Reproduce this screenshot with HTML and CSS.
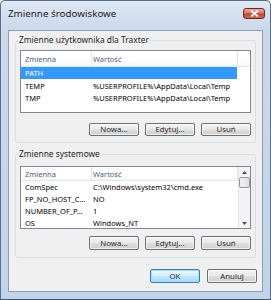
FILE: index.html
```html
<!DOCTYPE html>
<html>
<head>
<meta charset="utf-8">
<link rel="stylesheet" href="styles.css">
</head>
<body>
<div class="window">
  <div class="titlebar">
    <span class="title">Zmienne środowiskowe</span>
    <span class="close"><svg width="9" height="7" viewBox="0 0 9 7"><path d="M1 0.5 L8 6.5 M8 0.5 L1 6.5" stroke="#fff" stroke-width="1.8"/></svg></span>
  </div>
  <div class="client">
    <fieldset class="group g1">
      <legend>Zmienne użytkownika dla Traxter</legend>
      <div class="list l1">
        <div class="header">
          <span class="col c1">Zmienna</span>
          <span class="col c2">Wartość</span>
          <span class="col rest"></span>
        </div>
        <div class="row selected"><span class="c1">PATH</span><span class="c2"></span></div>
        <div class="row"><span class="c1">TEMP</span><span class="c2">%USERPROFILE%\AppData\Local\Temp</span></div>
        <div class="row"><span class="c1">TMP</span><span class="c2">%USERPROFILE%\AppData\Local\Temp</span></div>
      </div>
      <div class="buttons b1">
        <button class="btn">Nowa...</button>
        <button class="btn">Edytuj...</button>
        <button class="btn">Usuń</button>
      </div>
    </fieldset>
    <fieldset class="group g2">
      <legend>Zmienne systemowe</legend>
      <div class="list l2">
        <div class="listbody">
          <div class="header">
            <span class="col c1">Zmienna</span>
            <span class="col c2">Wartość</span>
          </div>
          <div class="row"><span class="c1">ComSpec</span><span class="c2">C:\Windows\system32\cmd.exe</span></div>
          <div class="row"><span class="c1">FP_NO_HOST_C...</span><span class="c2">NO</span></div>
          <div class="row"><span class="c1">NUMBER_OF_P...</span><span class="c2">1</span></div>
          <div class="row"><span class="c1">OS</span><span class="c2">Windows_NT</span></div>
        </div>
        <div class="scrollbar">
          <div class="arrow up"><svg width="5" height="3" viewBox="0 0 5 3"><path d="M0 3 L2.5 0 L5 3 Z" fill="#4d4d4d"/></svg></div>
          <div class="thumb"></div>
          <div class="track"></div>
          <div class="arrow down"><svg width="5" height="3" viewBox="0 0 5 3"><path d="M0 0 L2.5 3 L5 0 Z" fill="#4d4d4d"/></svg></div>
        </div>
      </div>
      <div class="buttons b2">
        <button class="btn">Nowa...</button>
        <button class="btn">Edytuj...</button>
        <button class="btn">Usuń</button>
      </div>
    </fieldset>
    <div class="buttons dlg">
      <button class="btn default">OK</button>
      <button class="btn">Anuluj</button>
    </div>
  </div>
</div>
</body>
</html>
```
FILE: styles.css
```css
* { box-sizing: border-box; }
html, body { margin: 0; padding: 0; background: #ffffff; }
body {
  width: 271px;
  height: 300px;
  overflow: hidden;
  font-family: "Noto Sans", "Open Sans", sans-serif;
  font-size: 8px;
  color: #000;
}
.window {
  width: 271px;
  height: 300px;
  background: linear-gradient(to bottom, #dfe8f3 0px, #cad8ea 30px, #c3d4ea 100%);
  border: 1px solid #5a6f8c;
  border-bottom-color: #3d5878;
  border-radius: 5px 5px 0 0;
  padding: 0 7px 7px 7px;
  display: flex;
  flex-direction: column;
}
.titlebar {
  height: 29px;
  display: flex;
  align-items: flex-start;
  justify-content: space-between;
}
.title {
  margin-top: 6px;
  font-size: 9.8px;
  color: #1e1e1e;
}
.close {
  margin-top: 7px;
  margin-right: -2px;
  width: 22px;
  height: 11px;
  border: 1px solid #6e2a22;
  border-radius: 3px;
  background: linear-gradient(to bottom, #e9a99b 0%, #d77a68 45%, #c2412a 55%, #cf6d52 100%);
  display: flex;
  align-items: center;
  justify-content: center;
}
.client {
  flex: 1;
  background: #f0f0f0;
  border: 1px solid #8b9fbb;
  display: flex;
  flex-direction: column;
  padding-top: 4px;
}
.group {
  margin: 0 6px;
  padding: 0 4px;
  border: 1px solid #d5dfe5;
  border-radius: 3px;
  min-width: 0;
}
.group legend {
  padding: 0 1px;
  margin-left: -2px;
  line-height: 10px;
  font-size: 8.4px;
  color: #1e1e1e;
}
.g1 { padding-bottom: 6px; }
.g2 { margin-top: 6px; padding-bottom: 7px; }
.list {
  background: #fff;
  border: 1px solid #828790;
  font-size: 7.5px;
  overflow: hidden;
}
.l1 { margin-top: 5px; height: 63px; }
.l2 { margin-top: 7px; height: 63px; display: flex; }
.listbody { flex: 1; min-width: 0; overflow: hidden; }
.header {
  display: flex;
  height: 16px;
  border-bottom: 1px solid #e5e5e5;
  background: linear-gradient(to bottom, #ffffff, #ffffff 60%, #f6f7f9);
}
.l2 .header { height: 14px; }
.header .col {
  display: flex;
  align-items: center;
  border-right: 1px solid #e5e5e5;
  color: #4c607a;
}
.c1 { width: 71px; flex: none; padding-left: 4px; white-space: nowrap; }
.c2 { width: 146px; flex: none; padding-left: 1px; white-space: nowrap; overflow: hidden; }
.header .rest { flex: 1; border-right: none; }
.row {
  display: flex;
  height: 12.4px;
  align-items: center;
  line-height: 10px;
  color: #000;
}
.l2 .row { height: 12px; }
.row.selected {
  background: #3399ff;
  color: #fff;
  width: 216px;
}
.scrollbar {
  width: 12px;
  flex: none;
  display: flex;
  flex-direction: column;
  background: #f4f4f4;
  border-left: 1px solid #e8e8e8;
}
.arrow {
  height: 10px;
  display: flex;
  align-items: center;
  justify-content: center;
}
.thumb {
  height: 11px;
  border: 1px solid #959595;
  border-radius: 2px;
  background: linear-gradient(to right, #f2f2f2, #e0e0e0);
}
.track { flex: 1; }
.buttons {
  display: flex;
  justify-content: flex-end;
  gap: 6px;
}
.b1 { margin-top: 10px; }
.b2 { margin-top: 7px; height: 14px; }
.b2 .btn { height: 14px; }
.btn {
  width: 50px;
  height: 13px;
  padding: 0;
  font-family: inherit;
  font-size: 7.8px;
  color: #2b2b2b;
  border: 1px solid #707070;
  border-radius: 2px;
  background: linear-gradient(to bottom, #f2f2f2 0%, #ebebeb 45%, #dddddd 55%, #cfcfcf 100%);
  box-shadow: inset 0 0 0 1px rgba(255,255,255,0.7);
  line-height: 11px;
}
.dlg { margin-top: 11px; margin-right: 5px; gap: 7px; }
.dlg .btn { height: 14px; }
.btn.default {
  border-color: #3c7fb1;
  box-shadow: inset 0 0 0 1px #a8dcf5;
  background: linear-gradient(to bottom, #eaf6fd 0%, #d9f0fc 45%, #bee6fd 55%, #a7d9f5 100%);
}
```
